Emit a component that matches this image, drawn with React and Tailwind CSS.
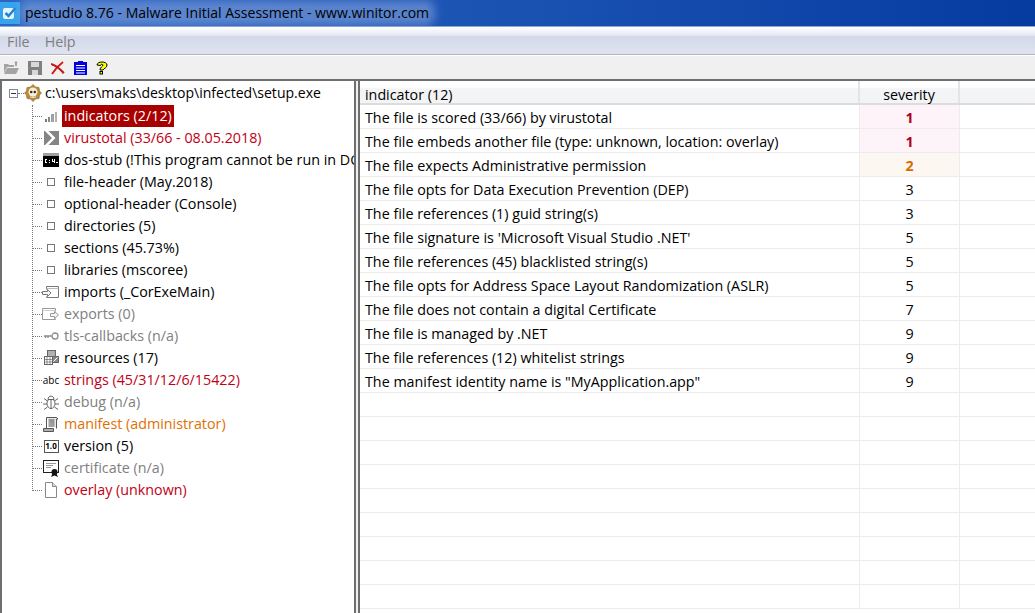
import React from 'react';

const FONT = "font-['Open_Sans','Noto_Sans',sans-serif]";

/* tree icons, 16px unless stated */
const Skull = () => (
  <svg width="18" height="18" viewBox="0 0 18 18">
    <path d="M9 0.500l2.500 2.500 3.500.5.5 3.500L17.500 9 15.500 11l-.5 3.500-3.500.5L9 17.500 6.500 15 3 14.500 2.500 11 .5 9l2-2L3 3.500 6.500 3z" fill="#b98a3a" stroke="#8a6420" strokeWidth="0.600" />
    <circle cx="9" cy="8" r="4.500" fill="#f6efdc" />
    <rect x="6.500" y="11" width="5" height="3" fill="#f6efdc" />
    <circle cx="7.200" cy="8" r="1.300" fill="#3a3020" />
    <circle cx="10.800" cy="8" r="1.300" fill="#3a3020" />
    <path d="M7.500 13.500v-1.500M9 13.500v-1.500M10.500 13.500v-1.500" stroke="#7a6a50" strokeWidth="0.500" />
  </svg>
);
const Bars = () => (
  <svg width="14" height="14" viewBox="0 0 14 14">
    <rect x="1" y="10" width="2" height="3" fill="#777" /><rect x="4" y="8" width="2" height="5" fill="#888" />
    <rect x="7" y="5" width="3" height="8" fill="#a0a0a0" /><rect x="11" y="3" width="2" height="10" fill="#b4b4b4" />
  </svg>
);
const Vt = () => (
  <svg width="15" height="14" viewBox="0 0 15 14">
    <rect x="0" y="0" width="15" height="14" fill="#858585" />
    <path d="M1 0h3.500L11.500 7l-7 7H1l7-7z" fill="#fff" />
    <path d="M0 0l7 7-7 7z" fill="#858585" />
  </svg>
);
const Dos = () => (
  <svg width="16" height="14" viewBox="0 0 16 14">
    <rect x="0" y="0" width="16" height="14" fill="#000" />
    <rect x="0" y="0" width="16" height="3" fill="#a0a0a0" />
    <path d="M2 6h2v1H3v2h1v1H2zM6 7h1v1H6zM6 9h1v1H6zM9 6h1v2h1V6h1v4h-1V9H9zM13 9h2v1h-2z" fill="#fff" />
  </svg>
);
const Box = () => <span className="block w-[8px] h-[8px] border border-[#777] bg-white" />;
const Imports = () => (
  <svg width="18" height="14" viewBox="0 0 18 14" fill="none" stroke="#777">
    <path d="M4.500 4.500v-3h12v11h-12v-1" fill="#fff" />
    <path d="M4.500 3.500h12" stroke="#bbb" />
    <path d="M0.500 6.500h5v-2l3.500 3.500-3.500 3.500v-2h-5z" fill="#f4f4f4" />
  </svg>
);
const Exports = () => (
  <svg width="18" height="14" viewBox="0 0 18 14" fill="none" stroke="#999">
    <path d="M0.500 1.500h13v3M13.500 11.500v1h-13v-11" fill="#fff" />
    <path d="M0.500 3.500h13" stroke="#ccc" />
    <path d="M8.500 6.500h4v-2l4 3.500-4 3.500v-2h-4z" fill="#f4f4f4" />
  </svg>
);
const Key = () => (
  <svg width="16" height="10" viewBox="0 0 16 10" fill="none" stroke="#8c8c8c" strokeWidth="1.300">
    <circle cx="12" cy="5" r="3" /><path d="M9 5H1M2.500 5v2M5 5v2" />
  </svg>
);
const Resources = () => (
  <svg width="16" height="16" viewBox="0 0 16 16" stroke="#666" fill="#fff">
    <rect x="4.500" y="0.500" width="8" height="7" fill="#b0b0b0" />
    <rect x="1.500" y="6.500" width="8" height="8" />
    <path d="M1.500 9.500h8M1.500 12h8M4 6.500v8M7 6.500v8" strokeWidth="0.700" />
    <rect x="9.500" y="6.500" width="6" height="6" fill="#8a8a8a" />
    <path d="M10.500 11.500l4-4" stroke="#fff" />
  </svg>
);
const Bug = () => (
  <svg width="18" height="16" viewBox="0 0 18 16" fill="none" stroke="#555" strokeWidth="0.900">
    <ellipse cx="9" cy="9.500" rx="4" ry="5" fill="#fff" />
    <path d="M6 5.500C6 1 12 1 12 5.500z" fill="#fff" />
    <path d="M9 5v9.500M5.500 7L2 4.500M12.500 7L16 4.500M5 10H1M13 10h4M5.500 13L2 15.500M12.500 13l3.500 2.500" />
  </svg>
);
const Scroll = () => (
  <svg width="16" height="16" viewBox="0 0 16 16" stroke="#555" fill="#d8d8d8">
    <path d="M3.500 1.500h10l1.500 1.500h-1.500v9.500M3.500 1.500v11" fill="#e8e8e8" />
    <path d="M0.500 15.500v-3h10v3z" fill="#b0b0b0" />
    <path d="M5.500 4h6M5.500 6h6M5.500 8h6M5.500 10h6" stroke="#444" fill="none" />
  </svg>
);
const Version = () => (
  <span className={`flex items-center justify-center w-[15px] h-[13px] border border-[#555] bg-white text-[8px] font-bold leading-none text-black ${FONT}`}>1.0</span>
);
const Cert = () => (
  <svg width="16" height="17" viewBox="0 0 16 17">
    <rect x="0.500" y="0.500" width="15" height="12" fill="#fff" stroke="#222" />
    <path d="M3 3.500h10M3 5.500h7M3 7.500h5" stroke="#999" />
    <circle cx="11.500" cy="12" r="3" fill="#111" />
    <path d="M9.500 13.500l-1.500 3.500 3.500-1.500 3.500 1.500-1.500-3.500z" fill="#111" />
  </svg>
);
const Page = () => (
  <svg width="14" height="16" viewBox="0 0 14 16" fill="#fff" stroke="#888">
    <path d="M1.500 0.500h7l4 4v11h-11z" /><path d="M8.500 0.500v4h4" fill="#ddd" />
  </svg>
);

const TREE = [
  { label: 'indicators (2/12)', icon: <Bars />, color: 'text-white', selected: true },
  { label: 'virustotal (33/66 - 08.05.2018)', icon: <Vt />, color: 'text-[#c00014]' },
  { label: 'dos-stub (!This program cannot be run in DOS mode.)', icon: <Dos />, color: 'text-black' },
  { label: 'file-header (May.2018)', icon: <Box />, color: 'text-black' },
  { label: 'optional-header (Console)', icon: <Box />, color: 'text-black' },
  { label: 'directories (5)', icon: <Box />, color: 'text-black' },
  { label: 'sections (45.73%)', icon: <Box />, color: 'text-black' },
  { label: 'libraries (mscoree)', icon: <Box />, color: 'text-black' },
  { label: 'imports (_CorExeMain)', icon: <Imports />, color: 'text-black' },
  { label: 'exports (0)', icon: <Exports />, color: 'text-[#808080]' },
  { label: 'tls-callbacks (n/a)', icon: <Key />, color: 'text-[#808080]' },
  { label: 'resources (17)', icon: <Resources />, color: 'text-black' },
  { label: 'strings (45/31/12/6/15422)', icon: <span className="text-[10px] leading-none text-black">abc</span>, color: 'text-[#c00014]' },
  { label: 'debug (n/a)', icon: <Bug />, color: 'text-[#808080]' },
  { label: 'manifest (administrator)', icon: <Scroll />, color: 'text-[#e07000]' },
  { label: 'version (5)', icon: <Version />, color: 'text-black' },
  { label: 'certificate (n/a)', icon: <Cert />, color: 'text-[#808080]' },
  { label: 'overlay (unknown)', icon: <Page />, color: 'text-[#c00014]' },
];

const ROWS = [
  ['The file is scored (33/66) by virustotal', 1],
  ['The file embeds another file (type: unknown, location: overlay)', 1],
  ['The file expects Administrative permission', 2],
  ['The file opts for Data Execution Prevention (DEP)', 3],
  ['The file references (1) guid string(s)', 3],
  ["The file signature is 'Microsoft Visual Studio .NET'", 5],
  ['The file references (45) blacklisted string(s)', 5],
  ['The file opts for Address Space Layout Randomization (ASLR)', 5],
  ['The file does not contain a digital Certificate', 7],
  ['The file is managed by .NET', 9],
  ['The file references (12) whitelist strings', 9],
  ['The manifest identity name is "MyApplication.app"', 9],
  ['', ''], ['', ''], ['', ''], ['', ''], ['', ''], ['', ''], ['', ''], ['', ''], ['', ''],
];

const severityClass = (s) => {
  if (s === 1) return 'bg-[#fdf3f8] text-[#b00018] font-bold';
  if (s === 2) return 'bg-[#fdf7f2] text-[#d96a00] font-bold';
  return 'text-black';
};

function TreeRow({ item }) {
  return (
    <div className="flex items-center h-[22px] shrink-0">
      <span className="w-[10px] border-t border-dotted border-[#777] shrink-0" />
      <span className="w-[18px] flex items-center justify-center shrink-0">{item.icon}</span>
      <span className={`ml-[2px] px-[2px] h-[22px] leading-[22px] whitespace-nowrap ${item.color} ${item.selected ? 'bg-[#a80000]' : ''}`}>
        {item.label}
      </span>
    </div>
  );
}

export default function App() {
  return (
    <div className={`w-[1035px] h-[613px] overflow-hidden flex flex-col bg-[#f0f0f0] text-[14.3px] ${FONT}`}>
      {/* Title bar */}
      <div className="h-[27px] shrink-0 flex items-center bg-gradient-to-r from-[#2c66c4] via-[#1a52b2] to-[#063ba0] border-b border-[#8fa6d0]">
        <span className="w-[20px] h-[22px] flex items-center justify-center bg-[#35a4ec]">
          <svg width="16" height="15" viewBox="0 0 16 15" fill="none">
            <rect x="1" y="2" width="11" height="11" rx="2" fill="#e8f4fc" />
            <path d="M3.500 7l3 3 7-8" stroke="#1c84d8" strokeWidth="2.500" />
          </svg>
        </span>
        <span className="ml-[5px] text-[14.05px] leading-none text-black rounded-sm bg-[#7e9fda]/60 shadow-[0_0_8px_6px_rgba(126,159,218,0.6)]">
          pestudio 8.76 - Malware Initial Assessment - www.winitor.com
        </span>
      </div>

      {/* Menu bar */}
      <div className="h-[28px] shrink-0 flex items-center gap-[15px] px-[7px] pt-[2px] text-[14.3px] text-[#808080] border-b border-[#b4b4b8] bg-[linear-gradient(#ffffff_0%,#e6e9f2_30%,#d3d9ea_35%,#dfe3f1_100%)]">
        <span>File</span>
        <span>Help</span>
      </div>

      {/* Toolbar */}
      <div className="h-[26px] shrink-0 flex items-center gap-[9px] pl-[4px] pt-[1px] border-t border-white border-b-2 border-b-[#6e6e6e]">
        <svg width="15" height="14" viewBox="0 0 15 14" fill="#a4a4a4">
          <path d="M0 3h4l1 1h5v2H3L0 12z" /><path d="M3 7h12l-3 6H0zM10 2l2-2 2 2h-1v3h-2V2z" />
        </svg>
        <svg width="14" height="14" viewBox="0 0 14 14" fill="#808080">
          <path d="M0 0h14v14H0z" /><rect x="3" y="1" width="8" height="5" fill="#d8d8d8" /><rect x="4" y="9" width="6" height="5" fill="#d8d8d8" />
        </svg>
        <svg width="14" height="14" viewBox="0 0 14 14" fill="none">
          <path d="M1 13C4 8 8 4 12 1" stroke="#e01010" strokeWidth="1.800" /><path d="M0 3c5 1 9 5 13 9" stroke="#e01010" strokeWidth="1.800" /><path d="M1 4c4 1 8 4 11 9" stroke="#444" strokeWidth="0.600" />
        </svg>
        <svg width="13" height="14" viewBox="0 0 13 14" fill="#fff" stroke="#0000e0">
          <rect x="0.500" y="1.500" width="12" height="12" fill="#0000e0" />
          <path d="M2 4.500h9M2 7h9M2 9.500h9M2 12h9" stroke="#fff" />
          <rect x="4" y="0" width="5" height="2" fill="#0000e0" stroke="none" />
        </svg>
        <svg width="12" height="16" viewBox="0 0 12 16">
          <path d="M1 5C1 1 11 1 11 5c0 3-3 3-4 5H4c0-3 3-3.500 3-5 0-1-2.500-1-2.500 0.500z" fill="#ffff00" stroke="#000" />
          <rect x="4" y="11.500" width="2.500" height="2.500" fill="#ffff00" stroke="#000" />
        </svg>
      </div>

      {/* Panes */}
      <div className="flex-1 min-h-0 flex gap-[2px] bg-[#f0f0f0]">
        {/* Tree */}
        <div className="w-[356px] shrink-0 bg-white border-l-2 border-r-2 border-[#6e6e6e] overflow-hidden">
          <div className="flex items-center h-[22px] mt-[1px] pl-[7px] whitespace-nowrap text-black text-[14.05px]">
            <span className="w-[9px] h-[9px] border border-[#7a8aa0] flex items-center justify-center shrink-0">
              <span className="w-[5px] h-px bg-[#333]" />
            </span>
            <span className="w-[6px] border-t border-dotted border-[#777]" />
            <span className="w-[18px] flex justify-center"><Skull /></span>
            <span className="ml-[3px]">c:\users\maks\desktop\infected\setup.exe</span>
          </div>
          <div className="relative ml-[30px] mt-[1px] flex flex-col">
            <span className="absolute left-0 top-0 h-[386px] border-l border-dotted border-[#777]" />
            {TREE.map((item) => (
              <TreeRow key={item.label} item={item} />
            ))}
          </div>
        </div>

        {/* Indicators table */}
        <div className="flex-1 min-w-0 bg-white border-l-2 border-[#6e6e6e] overflow-hidden">
          <div className="flex h-[24px] border-b-2 border-[#dcdcdc] bg-[linear-gradient(#ffffff_0%,#ffffff_30%,#f3f4f6_35%,#f3f4f6_100%)] text-black">
            <div className="w-[500px] pl-[5px] leading-[27px] border-r-2 border-[#e4e4e4]">indicator (12)</div>
            <div className="w-[100px] text-center leading-[27px] border-r-2 border-[#e4e4e4]">severity</div>
          </div>
          {ROWS.map(([text, severity], i) => (
            <div key={i} className="flex h-[24px] border-b border-[#ececec] leading-[25px] whitespace-nowrap">
              <div className="w-[500px] pl-[5px] text-black border-r border-[#ececec]">{text}</div>
              <div className={`w-[100px] text-center border-r border-[#ececec] ${severityClass(severity)}`}>{severity}</div>
            </div>
          ))}
        </div>
      </div>
    </div>
  );
}
